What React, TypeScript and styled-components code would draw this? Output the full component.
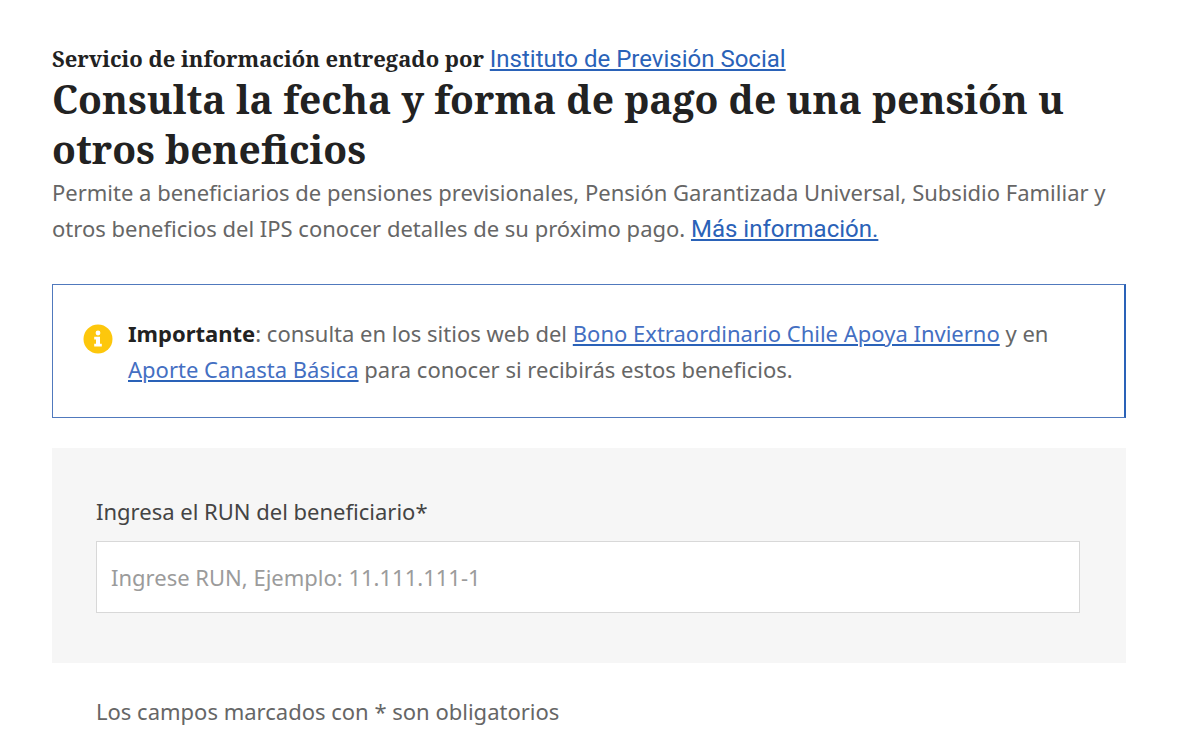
import React from "react";
import styled, { createGlobalStyle } from "styled-components";

const GlobalStyle = createGlobalStyle`
  *, *::before, *::after { box-sizing: border-box; }
  body {
    margin: 0;
    background: #fff;
    color: #666;
    font-family: "Noto Sans", "Open Sans", sans-serif;
    font-size: 22px;
    line-height: 36px;
  }
`;

const Page = styled.main`
  padding: 42px 74px 12px 52px;
`;

const Provider = styled.p`
  margin: 0;
  color: #222;
  font-family: "Roboto Slab", "Noto Serif", "DejaVu Serif", serif;
  font-size: 22px;
  font-weight: 700;
  line-height: 32px;
`;

const Title = styled.h1`
  margin: 0;
  color: #222;
  font-family: "Roboto Slab", "Noto Serif", "DejaVu Serif", serif;
  font-size: 39px;
  font-weight: 700;
  line-height: 50px;
`;

const Intro = styled.p`
  margin: 0;
`;

const Link = styled.a<{ $roboto?: boolean }>`
  color: ${(p) => (p.$roboto ? "#2a62b8" : "#446fc2")};
  font-family: ${(p) => (p.$roboto ? "Roboto, sans-serif" : "inherit")};
  font-size: ${(p) => (p.$roboto ? "24px" : "inherit")};
  font-weight: 400;
  line-height: 1;
  text-decoration: underline #2a62b8;
  text-decoration-thickness: 2px;
  text-underline-offset: 2px;
`;

const Notice = styled.section`
  display: flex;
  gap: 15px;
  margin-top: 38px;
  padding: 30px;
  border: 1px solid #5079bd;
  border-right: 2px solid #2a62b8;
`;

const InfoIcon = styled.svg`
  flex: none;
  width: 30px;
  height: 30px;
  margin-top: 9px;
`;

const NoticeText = styled.p`
  margin: 0;
  strong { color: #222; }
`;

const Panel = styled.div`
  margin-top: 30px;
  padding: 45px 46px 50px 44px;
  background: #f6f6f6;
`;

const Label = styled.label`
  display: block;
  margin-bottom: 12px;
  color: #444;
`;

const Input = styled.input`
  display: block;
  width: 100%;
  height: 72px;
  padding: 0 14px;
  border: 1px solid #d8d8d8;
  background: #fff;
  color: #444;
  font: inherit;
  &::placeholder { color: #9b9b9b; opacity: 1; }
`;

const Required = styled.p`
  margin: 30px 44px 0;
`;

export default function App() {
  return (
    <>
      <GlobalStyle />
      <Page>
        <Provider>
          Servicio de información entregado por{" "}
          <Link $roboto href="#ips">Instituto de Previsión Social</Link>
        </Provider>
        <Title>Consulta la fecha y forma de pago de una pensión u otros beneficios</Title>
        <Intro>
          Permite a beneficiarios de pensiones previsionales, Pensión Garantizada Universal, Subsidio Familiar y otros
          beneficios del IPS conocer detalles de su próximo pago.{" "}
          <Link $roboto href="#info">Más información.</Link>
        </Intro>
        <Notice>
          <InfoIcon viewBox="0 0 30 30" aria-hidden="true">
            <circle cx="15" cy="15" r="14.5" fill="#fdc70c" />
            <circle cx="15" cy="9" r="2.4" fill="#fff" />
            <path d="M11.2 12.8h5.8v7h1.8v2.8h-7.6v-2.8H13v-4.2h-1.8z" fill="#fff" />
          </InfoIcon>
          <NoticeText>
            <strong>Importante</strong>: consulta en los sitios web del{" "}
            <Link href="#bono">Bono Extraordinario Chile Apoya Invierno</Link> y en{" "}
            <Link href="#aporte">Aporte Canasta Básica</Link> para conocer si recibirás estos beneficios.
          </NoticeText>
        </Notice>
        <form>
          <Panel>
            <Label htmlFor="run">Ingresa el RUN del beneficiario*</Label>
            <Input id="run" name="run" placeholder="Ingrese RUN, Ejemplo: 11.111.111-1" required />
          </Panel>
          <Required>Los campos marcados con * son obligatorios</Required>
        </form>
      </Page>
    </>
  );
}
